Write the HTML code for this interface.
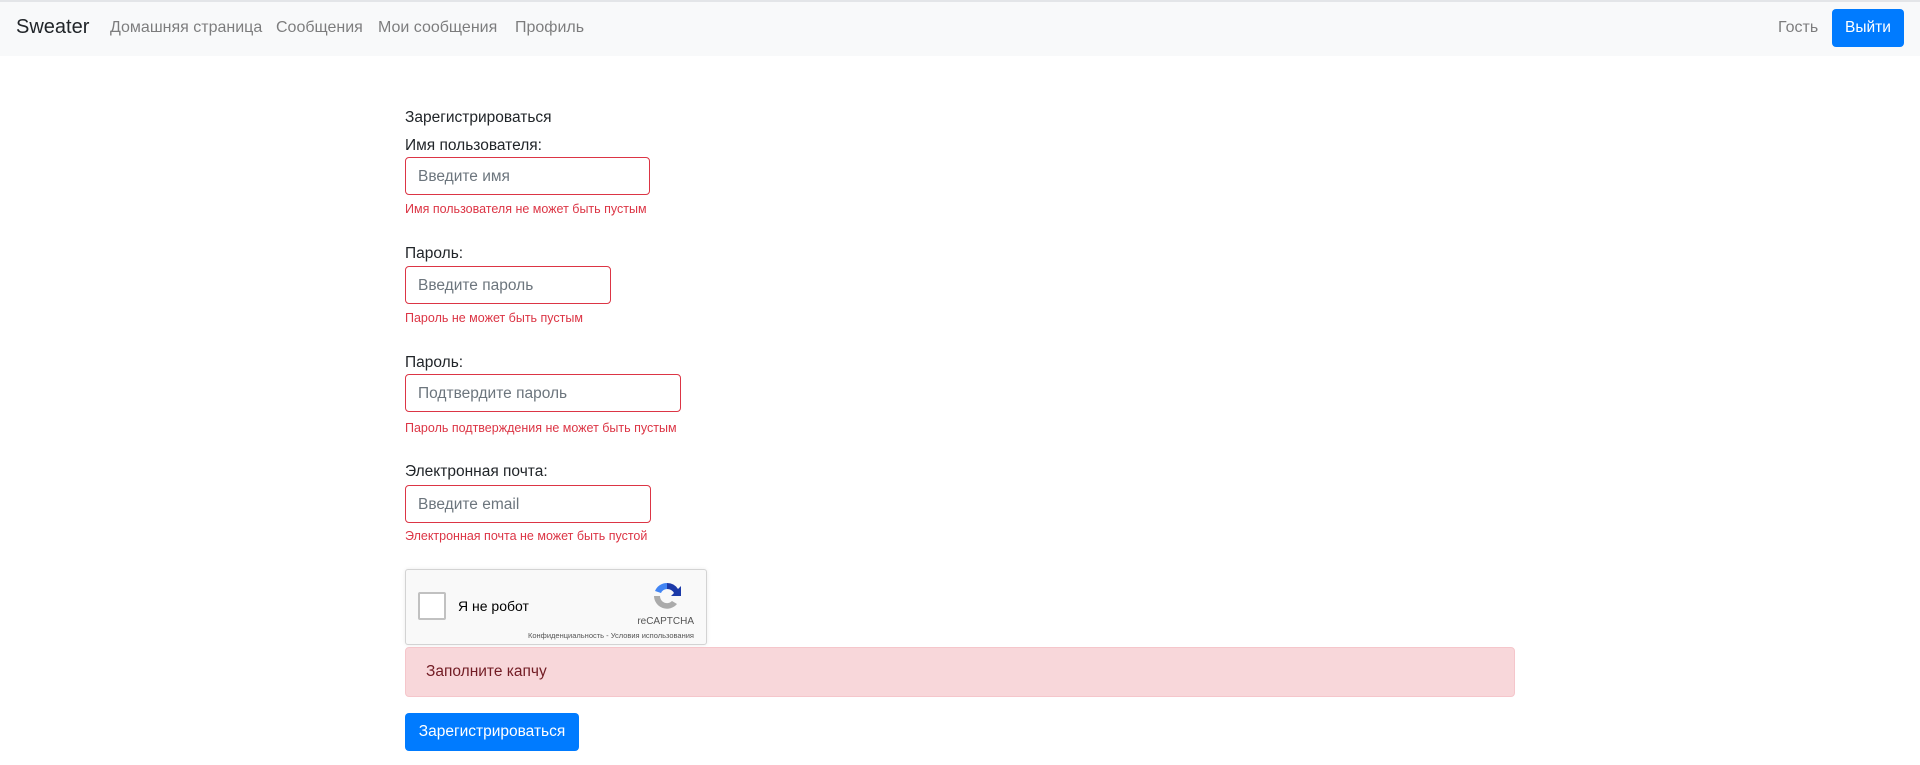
<!DOCTYPE html>
<html><head><meta charset="utf-8"><style>
*{box-sizing:border-box;margin:0;padding:0}
body{width:1920px;height:765px;background:#fff;font-family:"Liberation Sans",Arial,sans-serif;color:#212529;font-size:15.5px;position:relative;overflow:hidden}
.nav{position:absolute;left:0;top:0;width:1920px;height:56px;background:#f8f9fa;border-top:2px solid #e3e5e8}
.brand{position:absolute;left:16px;top:14px;font-size:20px;color:#212529}
.nl{position:absolute;top:17px;font-size:16px;color:rgba(0,0,0,.5)}
.btn{position:absolute;background:#007bff;color:#fff;border-radius:4px;font-size:15.5px;text-align:center}
.a{position:absolute;left:405px}
.lbl{font-size:15.5px;line-height:24px}
.inp{height:38px;border:1px solid #dc3545;border-radius:4px;padding:0 12px;line-height:38px;color:#6c757d;font-size:15.5px}
.err{font-size:12.5px;color:#dc3545;line-height:18px}
</style></head><body>
<div class="nav">
<div class="brand">Sweater</div>
<div class="nl" style="left:110px">Домашняя страница</div>
<div class="nl" style="left:276px">Сообщения</div>
<div class="nl" style="left:378px">Мои сообщения</div>
<div class="nl" style="left:515px">Профиль</div>
<div class="nl" style="left:1778px">Гость</div>
<div class="btn" style="left:1832px;top:7px;width:72px;height:38px;line-height:38px">Выйти</div>
</div>
<div class="a lbl" style="top:106px">Зарегистрироваться</div>
<div class="a lbl" style="top:134px">Имя пользователя:</div>
<div class="a inp" style="top:157px;width:245px">Введите имя</div>
<div class="a err" style="top:200px">Имя пользователя не может быть пустым</div>
<div class="a lbl" style="top:242px">Пароль:</div>
<div class="a inp" style="top:266px;width:206px">Введите пароль</div>
<div class="a err" style="top:309px">Пароль не может быть пустым</div>
<div class="a lbl" style="top:351px">Пароль:</div>
<div class="a inp" style="top:374px;width:276px">Подтвердите пароль</div>
<div class="a err" style="top:419px">Пароль подтверждения не может быть пустым</div>
<div class="a lbl" style="top:460px">Электронная почта:</div>
<div class="a inp" style="top:485px;width:246px">Введите email</div>
<div class="a err" style="top:527px">Электронная почта не может быть пустой</div>
<div class="a" style="top:569px;width:302px;height:76px;background:#f9f9f9;border:1px solid #d3d3d3;border-radius:3px;box-shadow:0 0 4px rgba(0,0,0,.08)">
 <div style="position:absolute;left:12px;top:22px;width:28px;height:28px;border:2px solid #c1c1c1;border-radius:2px;background:#fff"></div>
 <div style="position:absolute;left:52px;top:28px;font-size:14px;color:#000">Я не робот</div>
 <svg style="position:absolute;left:245px;top:10px" width="32" height="32" viewBox="0 0 32 32"><path d="M16 3a13 13 0 0 1 11 6l3-3v10h-10l3-3a8 8 0 0 0-7-4z" fill="#1c3aa9"/><path d="M16 3A13 13 0 0 0 4 11l6 2a7 7 0 0 1 6-4z" fill="#4285f4"/><path d="M3 16a13 13 0 0 0 23 8l-5-3a7 7 0 0 1-12-5z" fill="#ababab"/></svg>
 <div style="position:absolute;right:12px;top:46px;font-size:10px;color:#555">reCAPTCHA</div>
 <div style="position:absolute;right:12px;top:61px;font-size:7.5px;color:#555">Конфиденциальность - Условия использования</div>
</div>
<div class="a" style="top:647px;width:1110px;height:50px;background:#f8d7da;border:1px solid #f5c6cb;border-radius:4px;color:#721c24;padding:0 20px;line-height:48px">Заполните капчу</div>
<div class="btn" style="left:405px;top:713px;width:174px;height:38px;line-height:38px">Зарегистрироваться</div>
</body></html>
